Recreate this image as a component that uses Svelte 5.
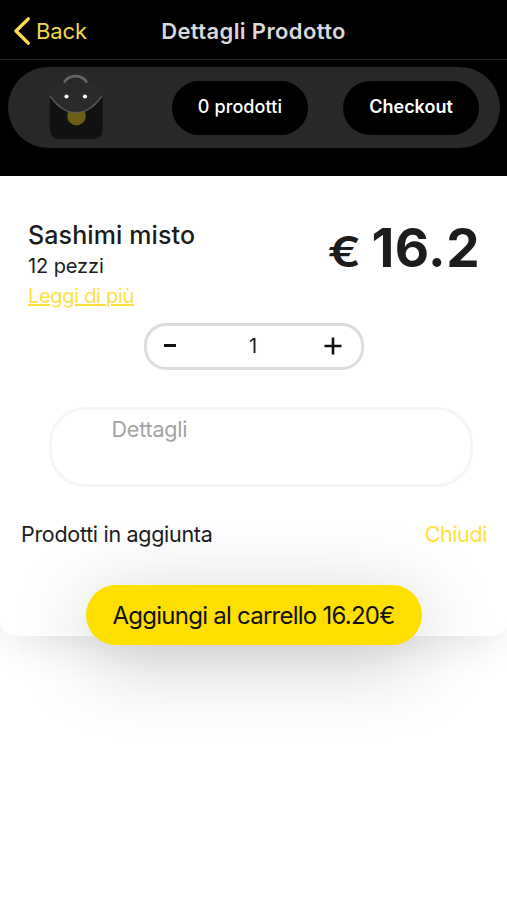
<script>
  const product = {
    name: 'Sashimi misto',
    description: '12 pezzi',
    price: 16.2
  };

  let quantity = 1;
  let details = '';
  let cartCount = 0;

  $: total = (product.price * quantity).toFixed(2);

  function decrease() {
    if (quantity > 1) {
      quantity -= 1;
    }
  }

  function increase() {
    quantity += 1;
  }

  function addToCart() {
    cartCount += quantity;
  }
</script>

<div class="screen">
  <header class="navbar">
    <button class="back">
      <svg width="18" height="30" viewBox="0 0 18 30">
        <path d="M15.3 2.9 L3 15 L15.3 27.1" fill="none" stroke="#ffdf4a" stroke-width="3.4" stroke-linecap="round" stroke-linejoin="round" />
      </svg>
      <span>Back</span>
    </button>
    <h1>Dettagli Prodotto</h1>
  </header>

  <div class="cart-area">
    <div class="cart-bar">
      <svg class="bag" width="56" height="66" viewBox="0 0 56 66">
        <path d="M2 20 V56 Q3 64 11 64 H45 Q54 64 54.5 56 V20 Z" fill="#111111" />
        <circle cx="28.5" cy="41" r="9.3" fill="#6b5d13" />
        <path d="M1 20 Q3 9 15 7 H41 Q53 9 55 20 C46 33 38 37.5 28 37.5 C18 37.5 10 33 1 20 Z" fill="#2a2a2a" />
        <path d="M2 21 C11 33 18 37.5 28 37.5 C38 37.5 45 33 54 21" fill="none" stroke="#5c5c5c" stroke-width="1.3" />
        <path d="M16 7.5 C21 -1 34 -1 39 7.5" fill="none" stroke="#666666" stroke-width="2.5" />
        <circle cx="18.5" cy="21.5" r="2.1" fill="#ffffff" />
        <circle cx="37" cy="21.5" r="2.1" fill="#ffffff" />
      </svg>
      <button class="pill count">{cartCount} prodotti</button>
      <button class="pill checkout">Checkout</button>
    </div>
  </div>

  <main class="card">
    <section class="product">
      <div class="info">
        <h2>{product.name}</h2>
        <p>{product.description}</p>
        <a href="#more">Leggi di più</a>
      </div>
      <div class="price"><span class="currency">€</span><span class="amount">{product.price}</span></div>
    </section>

    <div class="stepper">
      <button on:click={decrease} aria-label="Meno">
        <svg width="18" height="18" viewBox="0 0 18 18">
          <path d="M3 8.5 H15" stroke="#111111" stroke-width="3" />
        </svg>
      </button>
      <span class="quantity">{quantity}</span>
      <button on:click={increase} aria-label="Più">
        <svg width="18" height="18" viewBox="0 0 18 18">
          <path d="M0.5 9 H17.5 M9 0.5 V17.5" stroke="#111111" stroke-width="2.6" />
        </svg>
      </button>
    </div>

    <textarea bind:value={details} placeholder="Dettagli"></textarea>

    <div class="extras">
      <span class="label">Prodotti in aggiunta</span>
      <button class="close">Chiudi</button>
    </div>

    <button class="add" on:click={addToCart}>Aggiungi al carrello {total}€</button>
  </main>
</div>

<style>
  :global(body) {
    margin: 0;
    background-color: #fff;
  }

  .screen {
    height: 900px;
    overflow: hidden;
    background-color: #fff;
    color: #1c1c1c;
    font-family: Inter, 'Liberation Sans', sans-serif;
  }

  button {
    padding: 0;
    border: none;
    background: none;
    color: inherit;
    font-family: inherit;
    cursor: pointer;
    white-space: nowrap;
  }

  h1,
  h2,
  p {
    margin: 0;
  }

  .navbar {
    display: grid;
    grid-template-columns: 1fr auto 1fr;
    align-items: center;
    height: 60px;
    padding: 0 13px;
    box-sizing: border-box;
    border-bottom: 1px solid #292929;
    background-color: #000;
  }

  .back {
    display: flex;
    align-items: center;
    gap: 5px;
    color: #f3d84b;
    font-size: 22px;
    line-height: 30px;
    letter-spacing: -0.1px;
    padding-top: 2px;
  }

  h1 {
    color: #d9d9d9;
    font-size: 22px;
    font-weight: 600;
    line-height: 30px;
    letter-spacing: 0.38px;
    padding-top: 2px;
  }

  .cart-area {
    height: 116px;
    box-sizing: border-box;
    padding: 7px 7px 0 8px;
    background-color: #000;
  }

  .cart-bar {
    display: flex;
    align-items: center;
    height: 81px;
    padding: 0 21px 0 40px;
    border-radius: 41px;
    background-color: #282828;
  }

  .bag {
    margin-right: 68px;
  }

  .pill {
    width: 136px;
    height: 54px;
    padding-bottom: 2px;
    border-radius: 27px;
    background-color: #000;
    color: #fff;
    font-size: 18px;
  }

  .count {
    font-weight: 500;
    letter-spacing: 0.1px;
  }

  .checkout {
    margin-left: auto;
    font-weight: 600;
  }

  .card {
    display: flex;
    flex-direction: column;
    align-items: center;
    height: 460px;
    border-radius: 0 0 16px 16px;
    box-shadow: 0 14px 40px -8px rgba(0, 0, 0, 0.11);
  }

  .card > * {
    flex-shrink: 0;
  }

  .product {
    display: flex;
    justify-content: space-between;
    width: 100%;
    height: 147px;
    box-sizing: border-box;
    padding: 43px 28px 0;
  }

  .info h2 {
    font-size: 25px;
    font-weight: 500;
    line-height: 32px;
    letter-spacing: 0.12px;
  }

  .info p,
  .info a {
    display: block;
    font-size: 20px;
    line-height: 30px;
    letter-spacing: -0.1px;
  }

  .info a {
    color: #ffdf3d;
    letter-spacing: -0.3px;
    text-decoration: underline;
  }

  .price {
    display: flex;
    align-items: baseline;
    gap: 13px;
    height: 60px;
    font-weight: 700;
    line-height: 58px;
  }

  .currency {
    font-size: 42px;
    font-weight: 600;
    transform: scaleX(1.18);
  }

  .amount {
    margin-right: -1px;
    font-size: 53px;
    letter-spacing: 0.4px;
  }

  .stepper {
    display: flex;
    align-items: center;
    justify-content: space-between;
    width: 220px;
    height: 47px;
    box-sizing: border-box;
    padding: 0 18px 2px 14px;
    border: 3px solid #dcdcdc;
    border-radius: 22px;
    font-size: 20px;
  }

  .stepper svg {
    display: block;
  }

  .quantity {
    padding-left: 3px;
  }

  textarea {
    width: 424px;
    height: 80px;
    margin: 37px 0 0 14px;
    box-sizing: border-box;
    padding: 5px 60px;
    border: 3px solid #f5f5f5;
    border-radius: 36px;
    background: none;
    font-family: inherit;
    font-size: 21.5px;
    line-height: 28px;
    letter-spacing: -0.2px;
    resize: none;
    outline: none;
  }

  textarea::placeholder {
    color: #a3a3a3;
  }

  .extras {
    display: flex;
    justify-content: space-between;
    width: 100%;
    box-sizing: border-box;
    margin-top: 32px;
    padding: 0 20px 0 21px;
    font-size: 21.5px;
    line-height: 30px;
    letter-spacing: -0.3px;
  }

  .close {
    color: #ffdf3d;
    font-size: 21.5px;
    line-height: 30px;
    letter-spacing: -0.4px;
  }

  .add {
    width: 336px;
    height: 60px;
    margin-top: 36px;
    border-radius: 30px;
    background-color: #ffdf00;
    box-shadow: 0 16px 80px rgba(0, 0, 0, 0.22);
    color: #111;
    font-size: 24px;
    letter-spacing: -0.75px;
  }
</style>
